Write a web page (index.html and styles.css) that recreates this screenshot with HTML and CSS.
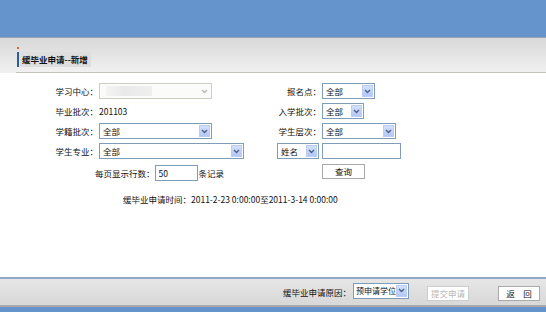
FILE: index.html
```html
<!DOCTYPE html>
<html lang="zh-CN">

<head>
    <meta charset="UTF-8">
    <title>缓毕业申请--新增</title>
    <link rel="stylesheet" href="styles.css">
</head>

<body>
    <div class="topbar"></div>

    <div class="titlebar">
        <div class="titleline">
            <div class="mark"><span class="dot"></span><span class="bar"></span></div>
            <h1>缓毕业申请--新增</h1>
        </div>
    </div>

    <div class="main">
        <div class="grid">
            <!-- 第一行 -->
            <div class="lbl">学习中心：</div>
            <div class="cell">
                <div class="sel sel-off w113"><span class="blur"></span><span class="arrow"><svg width="7" height="5" viewBox="0 0 7 5"><path d="M1 1L3.5 3.5L6 1" fill="none" stroke="#b8b8b8" stroke-width="1.4"/></svg></span></div>
            </div>
            <div class="lbl">报名点：</div>
            <div class="cell">
                <div class="sel w53"><span class="txt">全部</span><span class="arrow"><svg width="7" height="5" viewBox="0 0 7 5"><path d="M1 1L3.5 3.5L6 1" fill="none" stroke="#4d6185" stroke-width="1.4"/></svg></span></div>
            </div>

            <!-- 第二行 -->
            <div class="lbl">毕业批次：</div>
            <div class="cell"><span class="val">201103</span></div>
            <div class="lbl">入学批次：</div>
            <div class="cell">
                <div class="sel w42"><span class="txt">全部</span><span class="arrow"><svg width="7" height="5" viewBox="0 0 7 5"><path d="M1 1L3.5 3.5L6 1" fill="none" stroke="#4d6185" stroke-width="1.4"/></svg></span></div>
            </div>

            <!-- 第三行 -->
            <div class="lbl">学籍批次：</div>
            <div class="cell">
                <div class="sel w113"><span class="txt">全部</span><span class="arrow"><svg width="7" height="5" viewBox="0 0 7 5"><path d="M1 1L3.5 3.5L6 1" fill="none" stroke="#4d6185" stroke-width="1.4"/></svg></span></div>
            </div>
            <div class="lbl">学生层次：</div>
            <div class="cell">
                <div class="sel w74"><span class="txt">全部</span><span class="arrow"><svg width="7" height="5" viewBox="0 0 7 5"><path d="M1 1L3.5 3.5L6 1" fill="none" stroke="#4d6185" stroke-width="1.4"/></svg></span></div>
            </div>

            <!-- 第四行 -->
            <div class="lbl">学生专业：</div>
            <div class="cell">
                <div class="sel w145"><span class="txt">全部</span><span class="arrow"><svg width="7" height="5" viewBox="0 0 7 5"><path d="M1 1L3.5 3.5L6 1" fill="none" stroke="#4d6185" stroke-width="1.4"/></svg></span></div>
            </div>
            <div class="cell">
                <div class="sel w42"><span class="txt">姓名</span><span class="arrow"><svg width="7" height="5" viewBox="0 0 7 5"><path d="M1 1L3.5 3.5L6 1" fill="none" stroke="#4d6185" stroke-width="1.4"/></svg></span></div>
            </div>
            <div class="cell"><input class="inp w79" type="text"></div>

            <!-- 第五行 -->
            <div class="cell rows">每页显示行数：<input class="inp w43" type="text" value="50">条记录</div>
            <div class="cell"></div>
            <div class="cell"><button class="btn w43">查询</button></div>

            <!-- 时间 -->
            <div class="cell time">缓毕业申请时间：2011-2-23 0:00:00至2011-3-14 0:00:00</div>
        </div>
    </div>

    <div class="footer">
        <span>缓毕业申请原因：</span>
        <div class="sel sel-sm w56"><span class="txt">预申请学位</span><span class="arrow"><svg width="7" height="5" viewBox="0 0 7 5"><path d="M1 1L3.5 3.5L6 1" fill="none" stroke="#4d6185" stroke-width="1.4"/></svg></span></div>
        <button class="btn btn-off w42 submit" disabled>提交申请</button>
        <button class="btn w42 back">返　回</button>
    </div>
    <div class="bottombar"></div>
</body>

</html>
```

FILE: styles.css
```css
body {
    display: flex;
    flex-direction: column;
    height: 100vh;
    margin: 0;
    font-family: "Noto Sans CJK SC", sans-serif;
    font-size: 8.5px;
    color: #111;
    background-color: #fff;
}

.topbar {
    height: 37px;
    background-color: #6593cc;
    border-bottom: 1px solid #9aa4b0;
}

.titlebar {
    height: 35px;
    padding-left: 16px;
    background: linear-gradient(#d8d8d8, #f1f1f1);
}

.titleline {
    display: flex;
    align-items: flex-start;
    height: 34px;
    border-bottom: 1px solid #c4c4bb;
}

.mark {
    display: flex;
    flex-direction: column;
    margin-top: 9px;
    margin-left: 1px;
}

.dot {
    width: 2px;
    height: 2px;
    background-color: #e8641e;
}

.bar {
    width: 2px;
    height: 15px;
    margin-top: 3px;
    background-color: #2b5caa;
}

h1 {
    margin: 14px 0 0 1px;
    padding: 0 3px 0 2px;
    font-size: 8.5px;
    font-weight: bold;
    line-height: 15px;
    background-color: #dedede;
}

.main {
    flex: 1;
    padding-top: 10px;
}

.grid {
    display: grid;
    grid-template-columns: 99px 178px 45px 1fr;
    grid-auto-rows: 16px;
    row-gap: 4px;
}

.lbl {
    display: flex;
    align-items: center;
    justify-content: flex-end;
    padding-right: 1px;
    white-space: nowrap;
}

.cell {
    display: flex;
    align-items: center;
    white-space: nowrap;
}

.rows {
    grid-column: 1 / 3;
    padding-left: 95px;
    margin-top: 4px;
}

.time {
    grid-column: 1 / 5;
    padding-left: 123px;
    margin-top: 16px;
}

.sel {
    position: relative;
    display: flex;
    align-items: center;
    box-sizing: border-box;
    height: 16px;
    border: 1px solid #7f9db9;
    background-color: #fff;
}

.sel .txt {
    padding-left: 3px;
}

.sel-sm .txt {
    padding-left: 2px;
    font-size: 8px;
}

.sel .arrow {
    position: absolute;
    top: 1px;
    right: 1px;
    display: flex;
    align-items: center;
    justify-content: center;
    box-sizing: border-box;
    width: 11px;
    height: 12px;
    border: 1px solid #bccdf5;
    background: linear-gradient(#d3e0fd, #b4c8f5);
}

.sel-off {
    border-color: #cfcdc2;
    background-color: #fbfbf9;
}

.sel-off .arrow {
    border-color: transparent;
    background: none;
}

.blur {
    width: 46px;
    height: 10px;
    margin-left: 6px;
    background: linear-gradient(90deg, #f4f4f4, #e9e9e9 40%, #efefef);
}

.inp {
    box-sizing: border-box;
    height: 16px;
    margin: 0 1px 0 0;
    padding: 0 3px;
    border: 1px solid #7f9db9;
    font-family: inherit;
    font-size: 8.5px;
    color: #111;
    outline: none;
}

.btn {
    box-sizing: border-box;
    height: 15px;
    padding: 0;
    border: 1px solid #a9a9a9;
    background-color: #fff;
    font-family: inherit;
    font-size: 8.5px;
    color: #111;
    line-height: 13px;
}

.btn-off {
    border-color: #cdcdcd;
    color: #b8b8b8;
}

.w42 { width: 42px; }
.w43 { width: 43px; }
.w53 { width: 53px; }
.w56 { width: 56px; }
.w74 { width: 74px; }
.w79 { width: 79px; }
.w113 { width: 113px; }
.w145 { width: 145px; }

.footer {
    display: flex;
    align-items: center;
    justify-content: flex-end;
    height: 26px;
    padding-right: 6px;
    border-top: 2px solid #90a8c8;
    border-bottom: 2px solid #a9a9a9;
    background: linear-gradient(#e6e6e6, #d8d8d8);
}

.footer .sel {
    margin-left: 2px;
    margin-top: -3px;
}

.footer .btn {
    margin-top: 3px;
}

.submit {
    margin-left: 18px;
}

.back {
    margin-left: 29px;
}

.bottombar {
    height: 5px;
    background-color: #6593cc;
}
```
